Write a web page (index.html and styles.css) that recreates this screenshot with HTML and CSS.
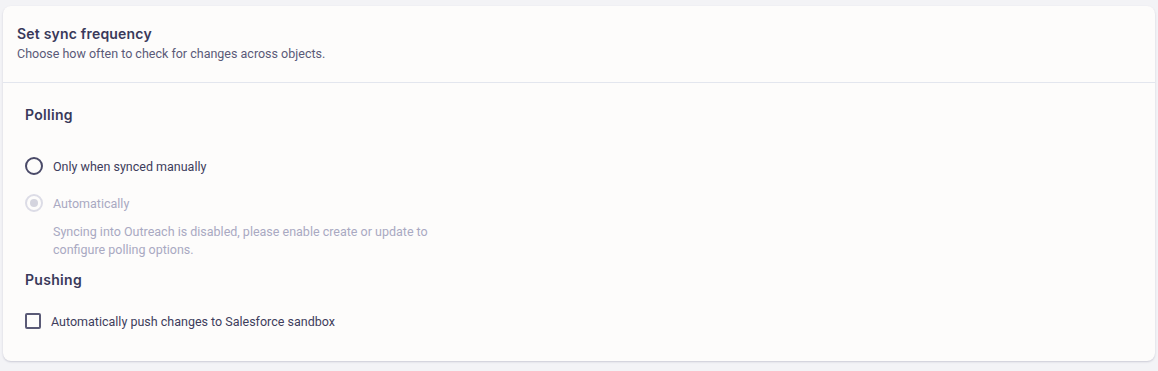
FILE: index.html
```html
<!DOCTYPE html>
<html lang="en">
<head>
  <meta charset="UTF-8">
  <title>Sync frequency</title>
  <link rel="stylesheet" href="styles.css">
</head>
<body>
  <div class="card">
    <div class="card-header">
      <h2>Set sync frequency</h2>
      <p>Choose how often to check for changes across objects.</p>
    </div>

    <div class="card-body">
      <h3 class="section-title">Polling</h3>

      <div class="options">
        <label class="option">
          <span class="radio"></span>
          <span>Only when synced manually</span>
        </label>

        <label class="option disabled">
          <span class="radio checked"></span>
          <span>Automatically</span>
        </label>
        <p class="hint">Syncing into Outreach is disabled, please enable create or update to configure polling options.</p>
      </div>

      <h3 class="section-title push-title">Pushing</h3>
      <label class="option check-option">
        <span class="checkbox"></span>
        <span>Automatically push changes to Salesforce sandbox</span>
      </label>
    </div>
  </div>
</body>
</html>
```

FILE: styles.css
```css
body {
  margin: 0;
  padding: 6px 3px 10px 3px;
  background-color: #f3f3f6;
  font-family: 'Roboto', 'Inter', sans-serif;
  color: #3d3d5c;
}
.card {
  background-color: #fdfcfb;
  border-radius: 8px;
  box-shadow: 0 1px 2px rgba(60, 60, 100, 0.22);
  height: 355px;
  box-sizing: border-box;
}
.card-header {
  padding: 18px 14px 0 14px;
  height: 77px;
  box-sizing: border-box;
  border-bottom: 1px solid #e3e6ee;
}
.card-header h2 {
  margin: 0;
  font-family: 'Inter', sans-serif;
  font-size: 14px;
  font-weight: 600;
  color: #39395a;
  line-height: 20px;
  letter-spacing: 0.2px;
}
.card-header p {
  margin: 0;
  font-size: 12.5px;
  color: #5a5a78;
  line-height: 20px;
}
.card-body {
  padding: 22px 22px 0 22px;
}
.section-title {
  margin: 0;
  font-family: 'Inter', sans-serif;
  font-size: 14px;
  font-weight: 600;
  color: #39395a;
  line-height: 20px;
  letter-spacing: 0.3px;
}
.options {
  padding-top: 31px;
}
.option {
  display: flex;
  align-items: center;
  gap: 10px;
  font-size: 12.5px;
  color: #3d3d5c;
  height: 20px;
  margin-bottom: 17px;
}
.option.disabled {
  color: #a9a9c2;
  margin-bottom: 0;
}
.radio {
  width: 18px;
  height: 18px;
  border: 2px solid #4a4a68;
  border-radius: 50%;
  box-sizing: border-box;
  display: flex;
  align-items: center;
  justify-content: center;
}
.disabled .radio {
  border-color: #dcdce6;
}
.radio.checked::after {
  content: '';
  width: 8px;
  height: 8px;
  border-radius: 50%;
  background-color: #d4d4de;
}
.hint {
  margin: 10px 0 0 28px;
  font-size: 12.5px;
  line-height: 18px;
  color: #a9a9c2;
  max-width: 400px;
}
.push-title {
  margin-top: 11px;
}
.check-option {
  margin-top: 21px;
  gap: 10px;
}
.checkbox {
  width: 16px;
  height: 16px;
  border: 2px solid #5a5a76;
  border-radius: 2px;
  box-sizing: border-box;
}
```
